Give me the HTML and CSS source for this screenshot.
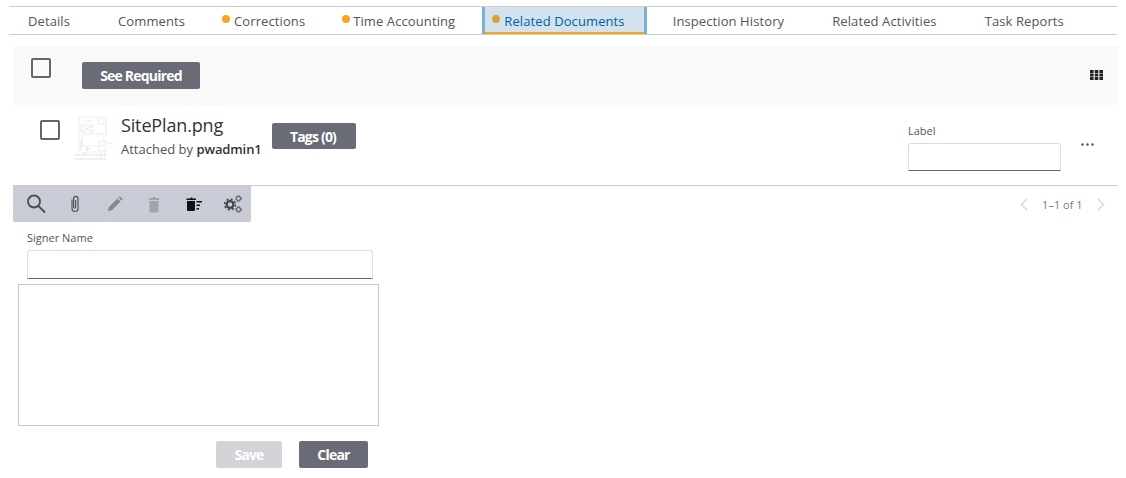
FILE: index.html
```html
<!DOCTYPE html>
<html lang="en">
<head>
<meta charset="utf-8">
<title>Related Documents</title>
<link rel="stylesheet" href="styles.css">
</head>
<body>
<nav class="tabs">
  <a class="tab">Details</a>
  <a class="tab">Comments</a>
  <a class="tab flagged first-flagged">Corrections</a>
  <a class="tab flagged time">Time Accounting</a>
  <a class="tab flagged active">Related Documents</a>
  <a class="tab">Inspection History</a>
  <a class="tab">Related Activities</a>
  <a class="tab">Task Reports</a>
</nav>

<section class="bulkbar">
  <span class="check bulk-check"></span>
  <button class="btn see">See Required</button>
  <svg class="grid-icon" width="13" height="10" viewBox="0 0 13 10"><path fill="#222" d="M0 0h3.6v2.9H0zM4.7 0h3.6v2.9H4.7zM9.4 0H13v2.9H9.4zM0 3.6h3.6v2.9H0zM4.7 3.6h3.6v2.9H4.700zM9.4 3.6H13v2.9H9.4zM0 7.1h3.6V10H0zM4.7 7.1h3.6V10H4.7zM9.4 7.1H13V10H9.4z"/></svg>
</section>

<section class="doc">
  <span class="check doc-check"></span>
  <svg class="thumb" width="42" height="46" viewBox="0 0 42 46" fill="none" stroke="#cfcfcf" stroke-width=".4">
    <path d="M6 1v36M6 1h27v18M11 5h8M25 3h6v5h-6zM8 9h12v7H8zM9 10l10 5M19 10l-10 5" />
    <path d="M9 18h22v12H9zM14 30v6h12M26 25h7v10h-7zM28 35v8M32 35v8M33 27h7M35 30h4" />
    <path d="M1 39h32M1 43h32M8 25v10M12 33h5M9 37h5" stroke="#b5b5b5"/>
  </svg>
  <div class="doc-info">
    <div class="doc-name">SitePlan.png</div>
    <div class="doc-by">Attached by <span class="doc-user">pwadmin1</span></div>
  </div>
  <button class="btn tags">Tags (0)</button>
  <div class="label-field">
    <label class="small-label">Label</label>
    <span class="input label-input"></span>
  </div>
  <svg class="more" width="13" height="3" viewBox="0 0 13 3"><circle cx="1.500" cy="1.500" r="1.200" fill="#555"/><circle cx="6.500" cy="1.500" r="1.200" fill="#555"/><circle cx="11.500" cy="1.500" r="1.200" fill="#555"/></svg>
</section>

<section class="toolrow">
  <div class="toolbar">
    <svg class="tool" width="20" height="20" viewBox="0 0 20 20" fill="none" stroke="#4c4c4c" stroke-width="1.800"><circle cx="8" cy="7.500" r="6"/><path d="M12.500 12l6 6" stroke-linecap="round"/></svg>
    <svg class="tool" width="20" height="20" viewBox="0 0 20 20" fill="none" stroke="#555" stroke-width="1.200"><path d="M7 5.500v9a3 3 0 0 0 6 0V4.500a2.200 2.200 0 0 0-4.400 0V13a1 1 0 0 0 2 0V6"/></svg>
    <svg class="tool" width="20" height="20" viewBox="0 0 20 20"><path fill="#84868e" d="M3 17l.8-3.800L12.500 4.500l3 3L6.800 16.200zM13.500 3.500l1.300-1.200 3 3-1.300 1.200z"/></svg>
    <svg class="tool" width="20" height="20" viewBox="0 0 20 20"><path fill="#a2a4ab" d="M5.500 7h9v10.500a1 1 0 0 1-1 1h-7a1 1 0 0 1-1-1zM5 4h3l1-1h2l1 1h3v2H5z"/></svg>
    <svg class="tool" width="20" height="20" viewBox="0 0 20 20"><path fill="#111" d="M3 7h8v9a1 1 0 0 1-1 1H4a1 1 0 0 1-1-1zM2.500 4.500H6L7 3.500h1l1 1h3v1.500H2.500zM12.500 7H18v1.400h-5.500zM12.500 10.500H16v1.400h-3.500zM12.500 14H15v1.400h-2.500z"/></svg>
    <svg class="tool" width="20" height="20" viewBox="0 0 20 20" fill="none" stroke="#444">
      <circle cx="7" cy="10.500" r="3.400" stroke-width="2.200"/>
      <circle cx="7" cy="10.500" r="5.400" stroke-width="1.500" stroke-dasharray="2.100 2.140"/>
      <circle cx="15.500" cy="4.500" r="2" stroke-width=".9"/>
      <circle cx="15.500" cy="4.500" r="3" stroke-width=".8" stroke-dasharray="1.300 1.050"/>
      <circle cx="15.500" cy="15.500" r="2" stroke-width=".9"/>
      <circle cx="15.500" cy="15.500" r="3" stroke-width=".8" stroke-dasharray="1.300 1.050"/>
    </svg>
  </div>
  <div class="pager">
    <svg width="8" height="13" viewBox="0 0 8 13" fill="none" stroke="#d4d4d4" stroke-width="1.300"><path d="M7 1L1.500 6.500 7 12"/></svg>
    <span class="pager-text">1–1 of 1</span>
    <svg width="8" height="13" viewBox="0 0 8 13" fill="none" stroke="#d4d4d4" stroke-width="1.300"><path d="M1 1l5.500 5.500L1 12"/></svg>
  </div>
</section>

<section class="signer">
  <label class="small-label">Signer Name</label>
  <span class="input signer-input"></span>
</section>
<div class="sigpad"></div>
<div class="actions">
  <button class="btn save">Save</button>
  <button class="btn clear">Clear</button>
</div>
</body>
</html>
```

FILE: styles.css
```css
* { box-sizing: border-box; }
html, body { margin: 0; padding: 0; }
body {
  width: 1126px;
  height: 478px;
  overflow: hidden;
  background: #fff;
  font-family: "Open Sans", "Liberation Sans", sans-serif;
  color: #444;
}
.tabs {
  display: flex;
  gap: 48px;
  align-items: stretch;
  height: 29px;
  margin: 6px 9px 0 9px;
  padding-left: 19px;
  border-top: 1px solid #ccc;
  border-bottom: 1px solid #ccc;
  font-size: 13px;
  line-height: 28px;
  letter-spacing: .1px;
  color: #555;
}
.tab { position: relative; white-space: nowrap; }
.first-flagged { margin-left: 1px; }
.tab.flagged::before {
  content: "";
  position: absolute;
  left: -12px;
  top: 8px;
  width: 8px;
  height: 8px;
  border-radius: 50%;
  background: #f5a623;
}
.tab.time::before { left: -11px; }
.tab.active {
  margin: 0 -22px 0 -21px;
  padding: 0 19px;
  border-left: 3px solid #7fb0d4;
  border-right: 3px solid #7fb0d4;
  background: #d2e2ee;
  color: #00629b;
  box-shadow: inset 0 -2px 0 #f5a623;
}
.tab.active::before { left: 7px; background: #d7a136; }
.btn {
  border: 0;
  border-radius: 2px;
  background: #696c77;
  color: #fff;
  font-family: inherit;
  font-size: 14px;
  font-weight: 700;
  letter-spacing: -.8px;
  padding: 0;
  height: 27px;
}
.check {
  display: block;
  width: 20px;
  height: 20px;
  border: 2px solid #666;
  border-radius: 2px;
  background: #fff;
  flex: none;
}
.bulkbar {
  display: flex;
  align-items: flex-start;
  height: 59px;
  margin: 11px 8px 0 13px;
  background: #f9f9f9;
}
.bulk-check { margin: 12px 0 0 18px; background: transparent; }
.see { width: 118px; margin: 16px 0 0 31px; }
.grid-icon { margin: 24px 15px 0 auto; }
.doc {
  display: flex;
  align-items: flex-start;
  height: 81px;
  margin: 0 8px 0 13px;
  border-bottom: 1px solid #ccc;
}
.doc-check { margin: 15px 0 0 27px; }
.thumb { margin: 11px 0 0 13px; flex: none; }
.doc-info { margin: 7px 0 0 6px; width: 151px; }
.doc-name { font-size: 18px; line-height: 26px; letter-spacing: -.15px; color: #333; }
.doc-by { font-size: 13px; line-height: 18px; margin-top: 2px; color: #555; }
.doc-user { color: #333; font-weight: 600; letter-spacing: -.1px; }
.tags { width: 84px; height: 26px; margin-top: 18px; padding-right: 2px; }
.label-field { margin: 18px 0 0 auto; width: 153px; }
.small-label { display: block; font-size: 11px; line-height: 15px; color: #555; }
.input {
  display: block;
  background: #fff;
  border: 1px solid #ddd;
  border-bottom: 1px solid #666;
  border-radius: 3px 3px 0 0;
}
.label-input { height: 28px; margin-top: 5px; }
.more { flex: none; margin: 38px 24px 0 20px; }
.toolrow { display: flex; align-items: flex-start; margin: 0 8px 0 13px; }
.toolbar {
  display: flex;
  align-items: center;
  gap: 19.4px;
  height: 36px;
  width: 238px;
  padding-left: 13px;
  background: #c9ccd6;
  border-radius: 0 0 2px 2px;
}
.tool { flex: none; }
.pager {
  display: flex;
  align-items: center;
  gap: 14.5px;
  margin: 11px 13px 0 auto;
  height: 15px;
}
.pager-text { font-size: 11px; color: #777; }
.signer { margin: 8px 0 0 27px; width: 346px; }
.signer-input { height: 29px; margin-top: 5px; }
.sigpad {
  width: 361px;
  height: 142px;
  margin: 5px 0 0 18px;
  border: 1px solid #c8c8c8;
}
.actions { display: flex; gap: 17px; margin: 15px 0 0 216px; }
.save { width: 66px; background: #d2d4d8; }
.clear { width: 69px; }
```
